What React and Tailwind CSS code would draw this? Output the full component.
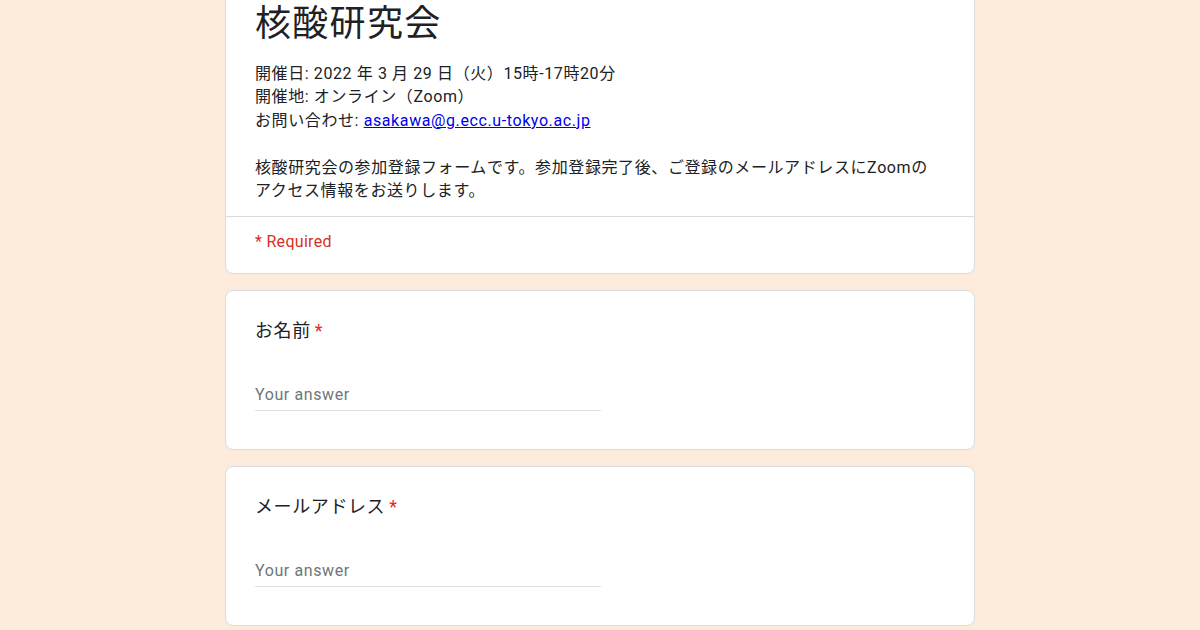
import React from "react"

const font = "font-[Roboto,'Noto_Sans_CJK_JP',sans-serif]"

function Question({ label }) {
  return (
    <div className="rounded-lg border border-[#dadce0] bg-white px-[29px] pt-[27px] pb-[38px]">
      <div className="text-[18px] leading-[26px] tracking-[0.6px] text-[#202124]">
        {label}
        <span className="ml-1 text-[#d93025]">*</span>
      </div>
      <div className="mt-[40px] w-[346px] border-b border-[#e0e0e0] pb-1 text-[16px] leading-[22px] tracking-[0.6px] text-[#70757a]">
        Your answer
      </div>
    </div>
  )
}

export default function App() {
  return (
    <div className={`h-[630px] w-[1200px] overflow-hidden bg-[#fdebdc] ${font}`}>
      <div className="mx-auto -mt-[29px] flex w-[750px] flex-col gap-4">
        <div className="rounded-lg border border-[#dadce0] bg-white">
          <div className="px-[29px] pt-[30px] pb-[14px]">
            <h1 className="text-[36px] leading-[44px] tracking-[1.3px] text-[#202124]">核酸研究会</h1>
            <p className="mt-[16px] text-[16px] leading-[23.4px] tracking-[0.6px] text-[#202124]">
              開催日: 2022 年 3 月 29 日（火）15時-17時20分
              <br />
              開催地: オンライン（Zoom）
              <br />
              お問い合わせ:{" "}
              <a href="#" className="text-[#0000ee] underline">
                asakawa@g.ecc.u-tokyo.ac.jp
              </a>
              <br />
              <br />
              核酸研究会の参加登録フォームです。参加登録完了後、ご登録のメールアドレスにZoomの
              <br />
              アクセス情報をお送りします。
            </p>
          </div>
          <div className="border-t border-[#dadce0] px-[29px] pt-[13px] pb-[20px] text-[16px] leading-[23px] tracking-[0.3px] text-[#d93025]">
            * Required
          </div>
        </div>
        <Question label="お名前" />
        <Question label="メールアドレス" />
      </div>
    </div>
  )
}
